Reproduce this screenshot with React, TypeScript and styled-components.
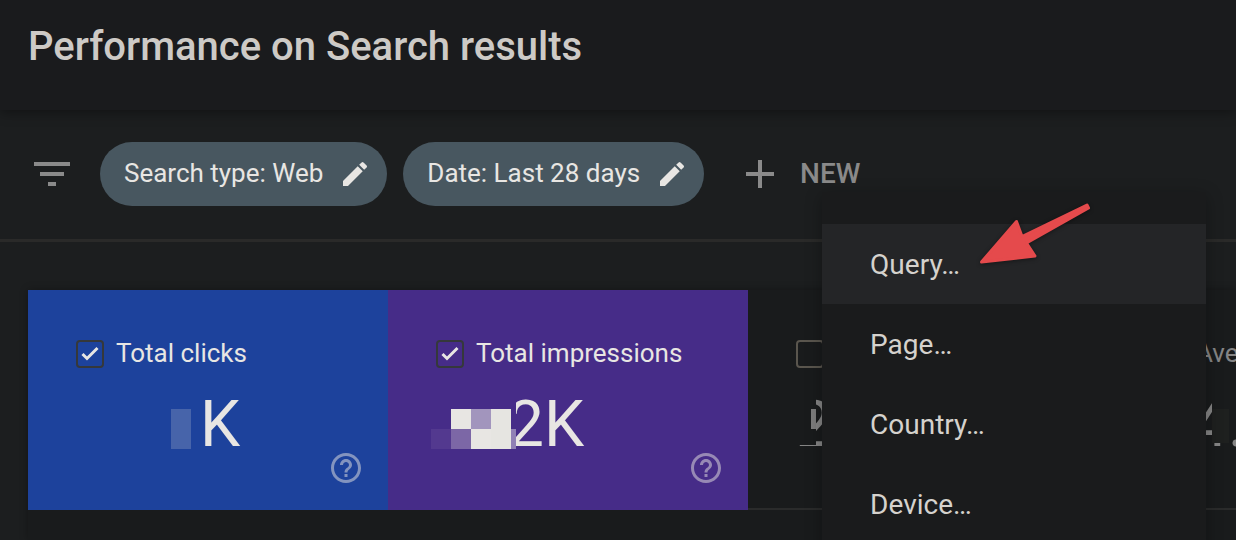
import React from "react";
import styled, { createGlobalStyle } from "styled-components";

const Global = createGlobalStyle`
  *, *::before, *::after { box-sizing: border-box; }
  html, body, #root { min-height: 100vh; }
  body {
    margin: 0;
    background: #1c1e1f;
    color: #e8e6e3;
    font-family: Roboto, "Liberation Sans", sans-serif;
    overflow: hidden;
  }
  #root { display: flex; }
  button { font-family: inherit; border: 0; background: none; padding: 0; margin: 0; color: inherit; text-align: left; }
`;

const Page = styled.div`
  flex: 1;
  min-width: 0;
  height: 100vh;
  overflow: hidden;
  display: flex;
  flex-direction: column;
`;

const Header = styled.header`
  flex: none;
  padding: 23px 28px 39px;
  background: #1a1b1d;
  box-shadow: 0 2px 12px rgba(0, 0, 0, 0.4);
`;

const Title = styled.h1`
  margin: 0;
  font-size: 40px;
  line-height: 48px;
  font-weight: 500;
  color: #cdcac6;
  white-space: nowrap;
`;

const Toolbar = styled.div`
  flex: none;
  display: flex;
  align-items: center;
  gap: 16px;
  height: 132px;
  padding: 0 28px 2px;
  border-bottom: 3px solid #2a2a29;
`;

const FilterIcon = styled.svg`
  flex: none;
  width: 48px;
  height: 48px;
  margin-right: 8px;
  fill: #8a8a8a;
`;

const Text = styled.span`
  padding-bottom: 2px;
`;

const Chip = styled.button`
  flex: none;
  display: flex;
  align-items: center;
  gap: 16px;
  height: 64px;
  padding: 0 16px 0 24px;
  border-radius: 32px;
  background: #485760;
  font-size: 26px;
  line-height: 32px;
  white-space: nowrap;
  svg { width: 32px; height: 32px; fill: #e8e6e3; }
`;

const NewWrap = styled.div`
  position: relative;
  margin-left: 16px;
`;

const NewButton = styled.button`
  display: flex;
  align-items: center;
  gap: 16px;
  font-size: 28px;
  line-height: 34px;
  font-weight: 500;
  color: #8a8a8a;
  svg { width: 48px; height: 48px; fill: #8a8a8a; }
`;

const Menu = styled.div`
  position: absolute;
  z-index: 2;
  left: 86px;
  top: 42px;
  width: 384px;
  padding: 32px 0 8px;
  background: #1a1b1c;
  box-shadow: 0 4px 16px rgba(0, 0, 0, 0.3);
`;

const MenuItem = styled.button<{ $active?: boolean }>`
  display: block;
  width: 100%;
  height: 80px;
  padding: 2px 48px 0;
  font-size: 28px;
  line-height: 78px;
  color: #d5d2cd;
  background: ${(p) => (p.$active ? "#242527" : "transparent")};
`;

const Arrow = styled.svg`
  position: absolute;
  z-index: 3;
  left: 236px;
  top: 42px;
  width: 124px;
  height: 80px;
  pointer-events: none;
  filter: drop-shadow(0 1px 2px rgba(0, 0, 0, 0.4));
`;

const Panel = styled.main`
  flex: 1;
  margin: 48px 0 0 28px;
  background: #191b1c;
  box-shadow: 0 0 8px rgba(0, 0, 0, 0.3);
`;

const Cards = styled.div`
  display: grid;
  grid-template-columns: repeat(4, 360px);
`;

const Card = styled.section<{ $bg?: string }>`
  position: relative;
  height: 220px;
  padding: 44px 0 0 48px;
  background: ${(p) => p.$bg || "transparent"};
  border-bottom: ${(p) => (p.$bg ? "0" : "2px solid #2a2b2b")};
  color: ${(p) => (p.$bg ? "#e8e6e3" : "#858585")};
`;

const Label = styled.label`
  display: flex;
  align-items: center;
  gap: 12px;
  height: 40px;
  font-size: 26px;
  line-height: 32px;
  white-space: nowrap;
`;

const Check = styled.input<{ $border: string }>`
  appearance: none;
  width: 28px;
  height: 28px;
  margin: 0;
  border: 2px solid ${(p) => p.$border};
  border-radius: 4px;
`;

const CheckBox = styled.span`
  display: grid;
  > * { grid-area: 1 / 1; }
  svg { width: 28px; height: 28px; fill: none; stroke: #e8e6e3; stroke-width: 3; pointer-events: none; }
`;

const Value = styled.div<{ $indent: number }>`
  margin-top: 11px;
  padding-left: ${(p) => p.$indent}px;
  font-size: 64px;
  line-height: 80px;
  white-space: nowrap;
`;

const Mosaic = styled.svg`
  position: absolute;
  left: 0;
  top: 0;
  width: 360px;
  height: 220px;
  pointer-events: none;
`;

const Help = styled.button`
  position: absolute;
  right: 24px;
  bottom: 24px;
  width: 36px;
  height: 36px;
  opacity: 0.5;
  svg { display: block; width: 36px; height: 36px; fill: #e8e6e3; }
`;

const Pencil = () => (
  <svg viewBox="0 0 24 24" aria-hidden="true">
    <path d="M3 17.25V21h3.75L17.81 9.94l-3.75-3.75L3 17.25zM20.71 7.04a1 1 0 0 0 0-1.41l-2.34-2.34a1 1 0 0 0-1.41 0l-1.83 1.83 3.75 3.75 1.83-1.83z" />
  </svg>
);

type Block = [x: number, y: number, w: number, h: number, fill: string];

type Metric = {
  label: string;
  value: string;
  indent: number;
  bg?: string;
  border: string;
  blocks: Block[];
};

const metrics: Metric[] = [
  {
    label: "Total clicks",
    value: "K",
    indent: 124,
    bg: "#1d429c",
    border: "#35383b",
    blocks: [[143, 119, 20, 40, "#4764aa"]],
  },
  {
    label: "Total impressions",
    value: "2K",
    indent: 72,
    bg: "#462c88",
    border: "#35383b",
    blocks: [
      [100, 105, 28, 54, "#462c88"],
      [43, 139, 20, 20, "#53398f"],
      [63, 119, 20, 20, "#e8e6e3"],
      [83, 119, 20, 20, "#a295bd"],
      [63, 139, 20, 20, "#7c67a6"],
      [83, 139, 20, 20, "#e8e6e3"],
      [103, 119, 20, 40, "#e6e5e1"],
      [123, 139, 5, 20, "#9080b5"],
    ],
  },
  {
    label: "Average CTR",
    value: "2",
    indent: 0,
    border: "#5a564e",
    blocks: [
      [48, 105, 20, 50, "#191b1c"],
      [63, 119, 5, 20, "#7d7d7d"],
    ],
  },
  {
    label: "Average position",
    value: "14.1",
    indent: 0,
    border: "#5a564e",
    blocks: [
      [104, 100, 17, 53, "#191b1c"],
      [104, 119, 17, 34, "#1e201f"],
    ],
  },
];

const menuItems = ["Query…", "Page…", "Country…", "Device…"];

export default function App() {
  return (
    <>
      <Global />
      <Page>
        <Header>
          <Title>Performance on Search results</Title>
        </Header>
        <Toolbar>
          <FilterIcon viewBox="0 0 24 24" aria-hidden="true">
            <path d="M10 18h4v-2h-4v2zM3 6v2h18V6H3zm3 7h12v-2H6v2z" />
          </FilterIcon>
          <Chip type="button">
            <Text>Search type: Web</Text>
            <Pencil />
          </Chip>
          <Chip type="button">
            <Text>Date: Last 28 days</Text>
            <Pencil />
          </Chip>
          <NewWrap>
            <NewButton type="button" aria-haspopup="menu">
              <svg viewBox="0 0 24 24" aria-hidden="true">
                <path d="M19 13h-6v6h-2v-6H5v-2h6V5h2v6h6v2z" />
              </svg>
              NEW
            </NewButton>
            <Menu role="menu">
              {menuItems.map((item, i) => (
                <MenuItem key={item} type="button" role="menuitem" $active={i === 0}>
                  {item}
                </MenuItem>
              ))}
            </Menu>
            <Arrow viewBox="972 192 124 80" aria-hidden="true">
              <path
                d="M981.500 262L1016.500 221.500L1022 236.500L1087 205L1088.500 208L1026.500 243L1035 256Z"
                fill="#e54a4c"
                stroke="#e54a4c"
                strokeWidth="3"
                strokeLinejoin="round"
              />
            </Arrow>
          </NewWrap>
        </Toolbar>
        <Panel>
          <Cards>
            {metrics.map((m) => (
              <Card key={m.label} $bg={m.bg}>
                <Label>
                  <CheckBox>
                    <Check type="checkbox" defaultChecked={!!m.bg} $border={m.border} />
                    {m.bg && (
                      <svg viewBox="0 0 28 28" aria-hidden="true">
                        <path d="M6.500 14l4.500 4.500L21.500 8" />
                      </svg>
                    )}
                  </CheckBox>
                  <Text>{m.label}</Text>
                </Label>
                <Value $indent={m.indent}>{m.value}</Value>
                <Mosaic viewBox="0 0 360 220" aria-hidden="true">
                  {m.blocks.map(([x, y, w, h, fill]) => (
                    <rect key={`${x}-${y}`} x={x} y={y} width={w} height={h} fill={fill} />
                  ))}
                </Mosaic>
                {m.bg && (
                  <Help type="button" aria-label={`About ${m.label}`}>
                    <svg viewBox="0 0 24 24" aria-hidden="true">
                      <path d="M11 18h2v-2h-2v2zm1-16C6.480 2 2 6.480 2 12s4.480 10 10 10 10-4.480 10-10S17.520 2 12 2zm0 18c-4.410 0-8-3.590-8-8s3.590-8 8-8 8 3.590 8 8-3.590 8-8 8zm0-14c-2.210 0-4 1.790-4 4h2c0-1.100.9-2 2-2s2 .9 2 2c0 2-3 1.750-3 5h2c0-2.250 3-2.500 3-5 0-2.210-1.790-4-4-4z" />
                    </svg>
                  </Help>
                )}
              </Card>
            ))}
          </Cards>
        </Panel>
      </Page>
    </>
  );
}
